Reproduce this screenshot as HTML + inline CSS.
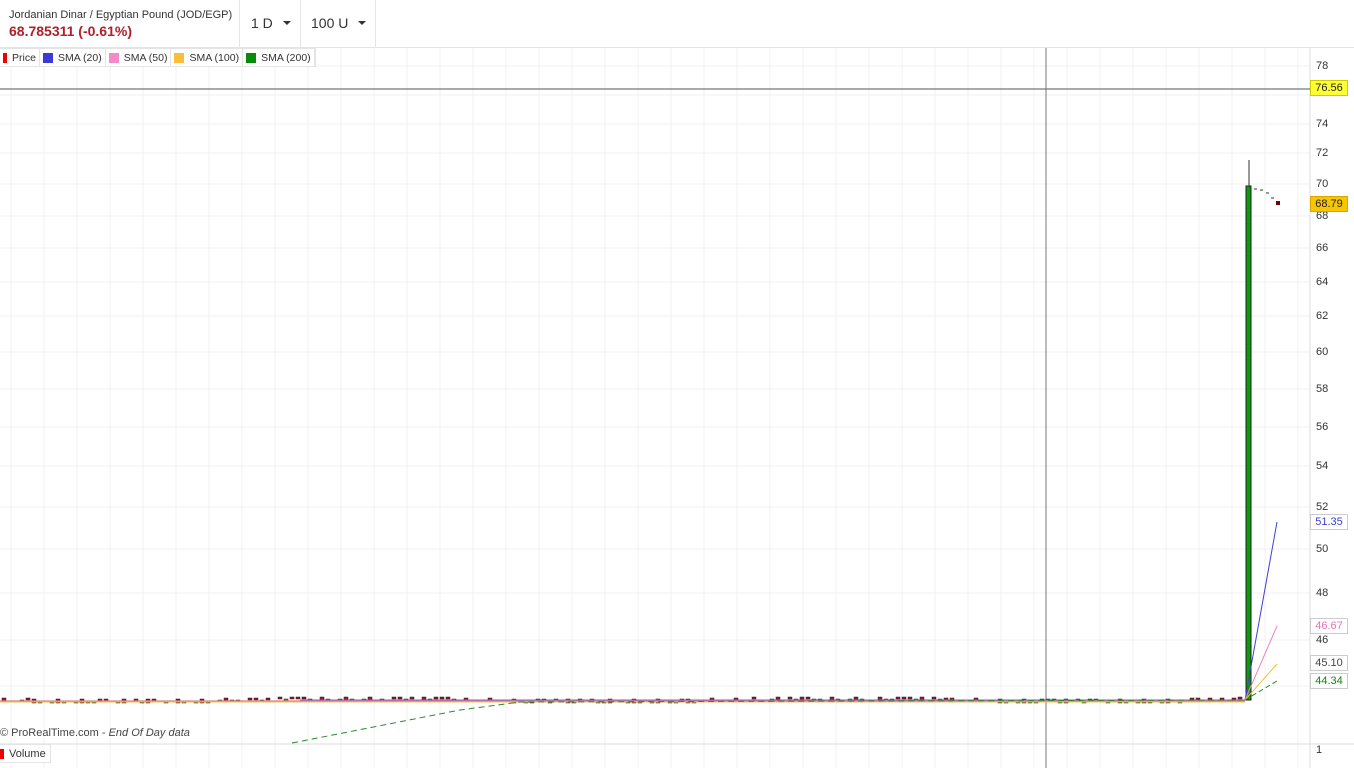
<!DOCTYPE html>
<html><head><meta charset="utf-8"><style>
body{margin:0;width:1354px;height:768px;overflow:hidden;background:#fff;font-family:"Liberation Sans",sans-serif;position:relative}
.top{position:absolute;left:0;top:0;width:1354px;height:47px;border-bottom:1px solid #e4e4e4}
.t1{position:absolute;left:9px;top:9px;font-size:11px;color:#333}
.t2{position:absolute;left:9px;top:23px;font-size:14px;font-weight:bold;color:#b0202a}
.sep{position:absolute;top:0;width:1px;height:47px;background:#e4e4e4}
.dd{position:absolute;top:15px;font-size:14px;color:#333}
.car{display:inline-block;width:0;height:0;border-left:4px solid transparent;border-right:4px solid transparent;border-top:4px solid #333;margin-left:10px;vertical-align:3px}
.leg{position:absolute;top:48px;left:0;height:17px;background:#fff;font-size:10.5px;color:#333;display:flex;border:1px solid #e4e4e4;border-left:none}
.leg span{padding:1px 3px 0 3px;border-right:1px solid #e4e4e4;display:flex;align-items:center}
.leg i{display:inline-block;width:10px;height:10px;margin-right:5px}
.lab{position:absolute;left:1316px;font-size:11px;color:#333}
.box{position:absolute;left:1310px;width:36px;height:14px;font-size:11px;text-align:center;line-height:14px;border:1px solid #ccc;background:#fff}
</style></head><body>
<div class="top">
<div class="t1">Jordanian Dinar / Egyptian Pound (JOD/EGP)</div>
<div class="t2">68.785311 (-0.61%)</div>
<div class="sep" style="left:239px"></div>
<div class="dd" style="left:251px">1 D<span class="car"></span></div>
<div class="sep" style="left:300px"></div>
<div class="dd" style="left:311px">100 U<span class="car"></span></div>
<div class="sep" style="left:375px"></div>
</div>
<svg id="s" width="1354" height="720" style="position:absolute;left:0;top:48px" xmlns="http://www.w3.org/2000/svg"></svg>
<div class="leg"><span><i style="background:#e00;width:4px"></i>Price</span><span><i style="background:#3a3ad8"></i>SMA (20)</span><span><i style="background:#f58ac8"></i>SMA (50)</span><span><i style="background:#f8be3a"></i>SMA (100)</span><span><i style="background:#0a8a0a"></i>SMA (200)</span></div>
<div class="lab" style="top:60px">78</div>
<div class="lab" style="top:118px">74</div>
<div class="lab" style="top:147px">72</div>
<div class="lab" style="top:178px">70</div>
<div class="lab" style="top:210px">68</div>
<div class="lab" style="top:242px">66</div>
<div class="lab" style="top:276px">64</div>
<div class="lab" style="top:310px">62</div>
<div class="lab" style="top:346px">60</div>
<div class="lab" style="top:383px">58</div>
<div class="lab" style="top:421px">56</div>
<div class="lab" style="top:460px">54</div>
<div class="lab" style="top:501px">52</div>
<div class="lab" style="top:543px">50</div>
<div class="lab" style="top:587px">48</div>
<div class="lab" style="top:634px">46</div>
<div class="lab" style="top:744px">1</div>
<div class="box" style="top:80px;background:#ffff33;border-color:#cc0;color:#222">76.56</div>
<div class="box" style="top:196px;background:#f8c600;border-color:#d8a800;color:#222">68.79</div>
<div class="box" style="top:514px;color:#4040d0">51.35</div>
<div class="box" style="top:618px;color:#f070b8">46.67</div>
<div class="box" style="top:655px;color:#444">45.10</div>
<div class="box" style="top:673px;color:#0a8a0a">44.34</div>
<div style="position:absolute;left:0;top:727px;font-size:11px;color:#444">© ProRealTime.com - <i>End Of Day data</i></div>
<div style="position:absolute;left:0;top:744px;height:17px;font-size:11px;color:#333;background:#fff;border:1px solid #e4e4e4;border-left:none;padding:0 4px 0 0;display:flex;align-items:center"><i style="display:inline-block;width:4px;height:10px;background:#e00;margin-right:5px"></i>Volume</div>
<script>
var s=document.getElementById('s'),h='';
var hy=[18,47,76,105,136,168,200,234,268,304,341,379,418,459,501,545,592,638];
hy.forEach(function(y){h+='<line x1="0" x2="1310" y1="'+y+'" y2="'+y+'" stroke="#f0f0f0"/>';});
for(var x=11;x<1310;x+=33){h+='<line x1="'+x+'" x2="'+x+'" y1="0" y2="720" stroke="#f0f0f0"/>';}
h+='<line x1="1310" x2="1310" y1="0" y2="720" stroke="#ddd"/>';
h+='<line x1="0" x2="1354" y1="696" y2="696" stroke="#ddd"/>';
h+='<line x1="0" x2="1310" y1="41" y2="41" stroke="#555"/>';
h+='<line x1="1046" x2="1046" y1="0" y2="720" stroke="#777"/>';
for(var x=2;x<1240;x+=6){var r=Math.sin(x*0.37)*Math.cos(x*0.11);if(Math.abs(r)<0.15)continue;var y=652+Math.round(Math.sin(x*0.013)*1.5)-(r>0?2:0);h+='<rect x="'+x+'" y="'+y+'" width="4" height="'+(r>0.5?4:2)+'" fill="'+(r>0?'#a01030':'#2a9a2a')+'" stroke="#222" stroke-width="0.5"/>';}
h+='<line x1="0" x2="1245" y1="653" y2="653" stroke="#e08080" stroke-width="1.2"/>';
h+='<line x1="300" x2="1245" y1="652" y2="652" stroke="#8060d0" stroke-width="1"/>';
h+='<line x1="0" x2="1245" y1="654" y2="654" stroke="#f0c050" stroke-width="1"/>';
h+='<path d="M292 695 L460 662 L520 654 L1245 652" stroke="#2a8a2a" stroke-dasharray="6,4" fill="none"/>';
h+='<rect x="1246" y="138" width="5" height="514" fill="#0a9a0a" stroke="#222" stroke-width="1"/>';
h+='<line x1="1249" x2="1249" y1="112" y2="138" stroke="#333"/>';
h+='<path d="M1254 141h3M1260 142h3M1266 145h3M1271 150h3" stroke="#333"/><rect x="1276" y="153" width="4" height="4" fill="#700"/>';
h+='<path d="M1245 652 L1277 474" stroke="#4040d0" fill="none"/>';
h+='<path d="M1245 652 L1277 578" stroke="#f080c0" fill="none"/>';
h+='<path d="M1245 652 L1277 616" stroke="#f0c040" fill="none"/>';
h+='<path d="M1245 652 L1277 633" stroke="#2a8a2a" stroke-dasharray="5,3" fill="none"/>';
s.innerHTML=h;
</script>
</body></html>
